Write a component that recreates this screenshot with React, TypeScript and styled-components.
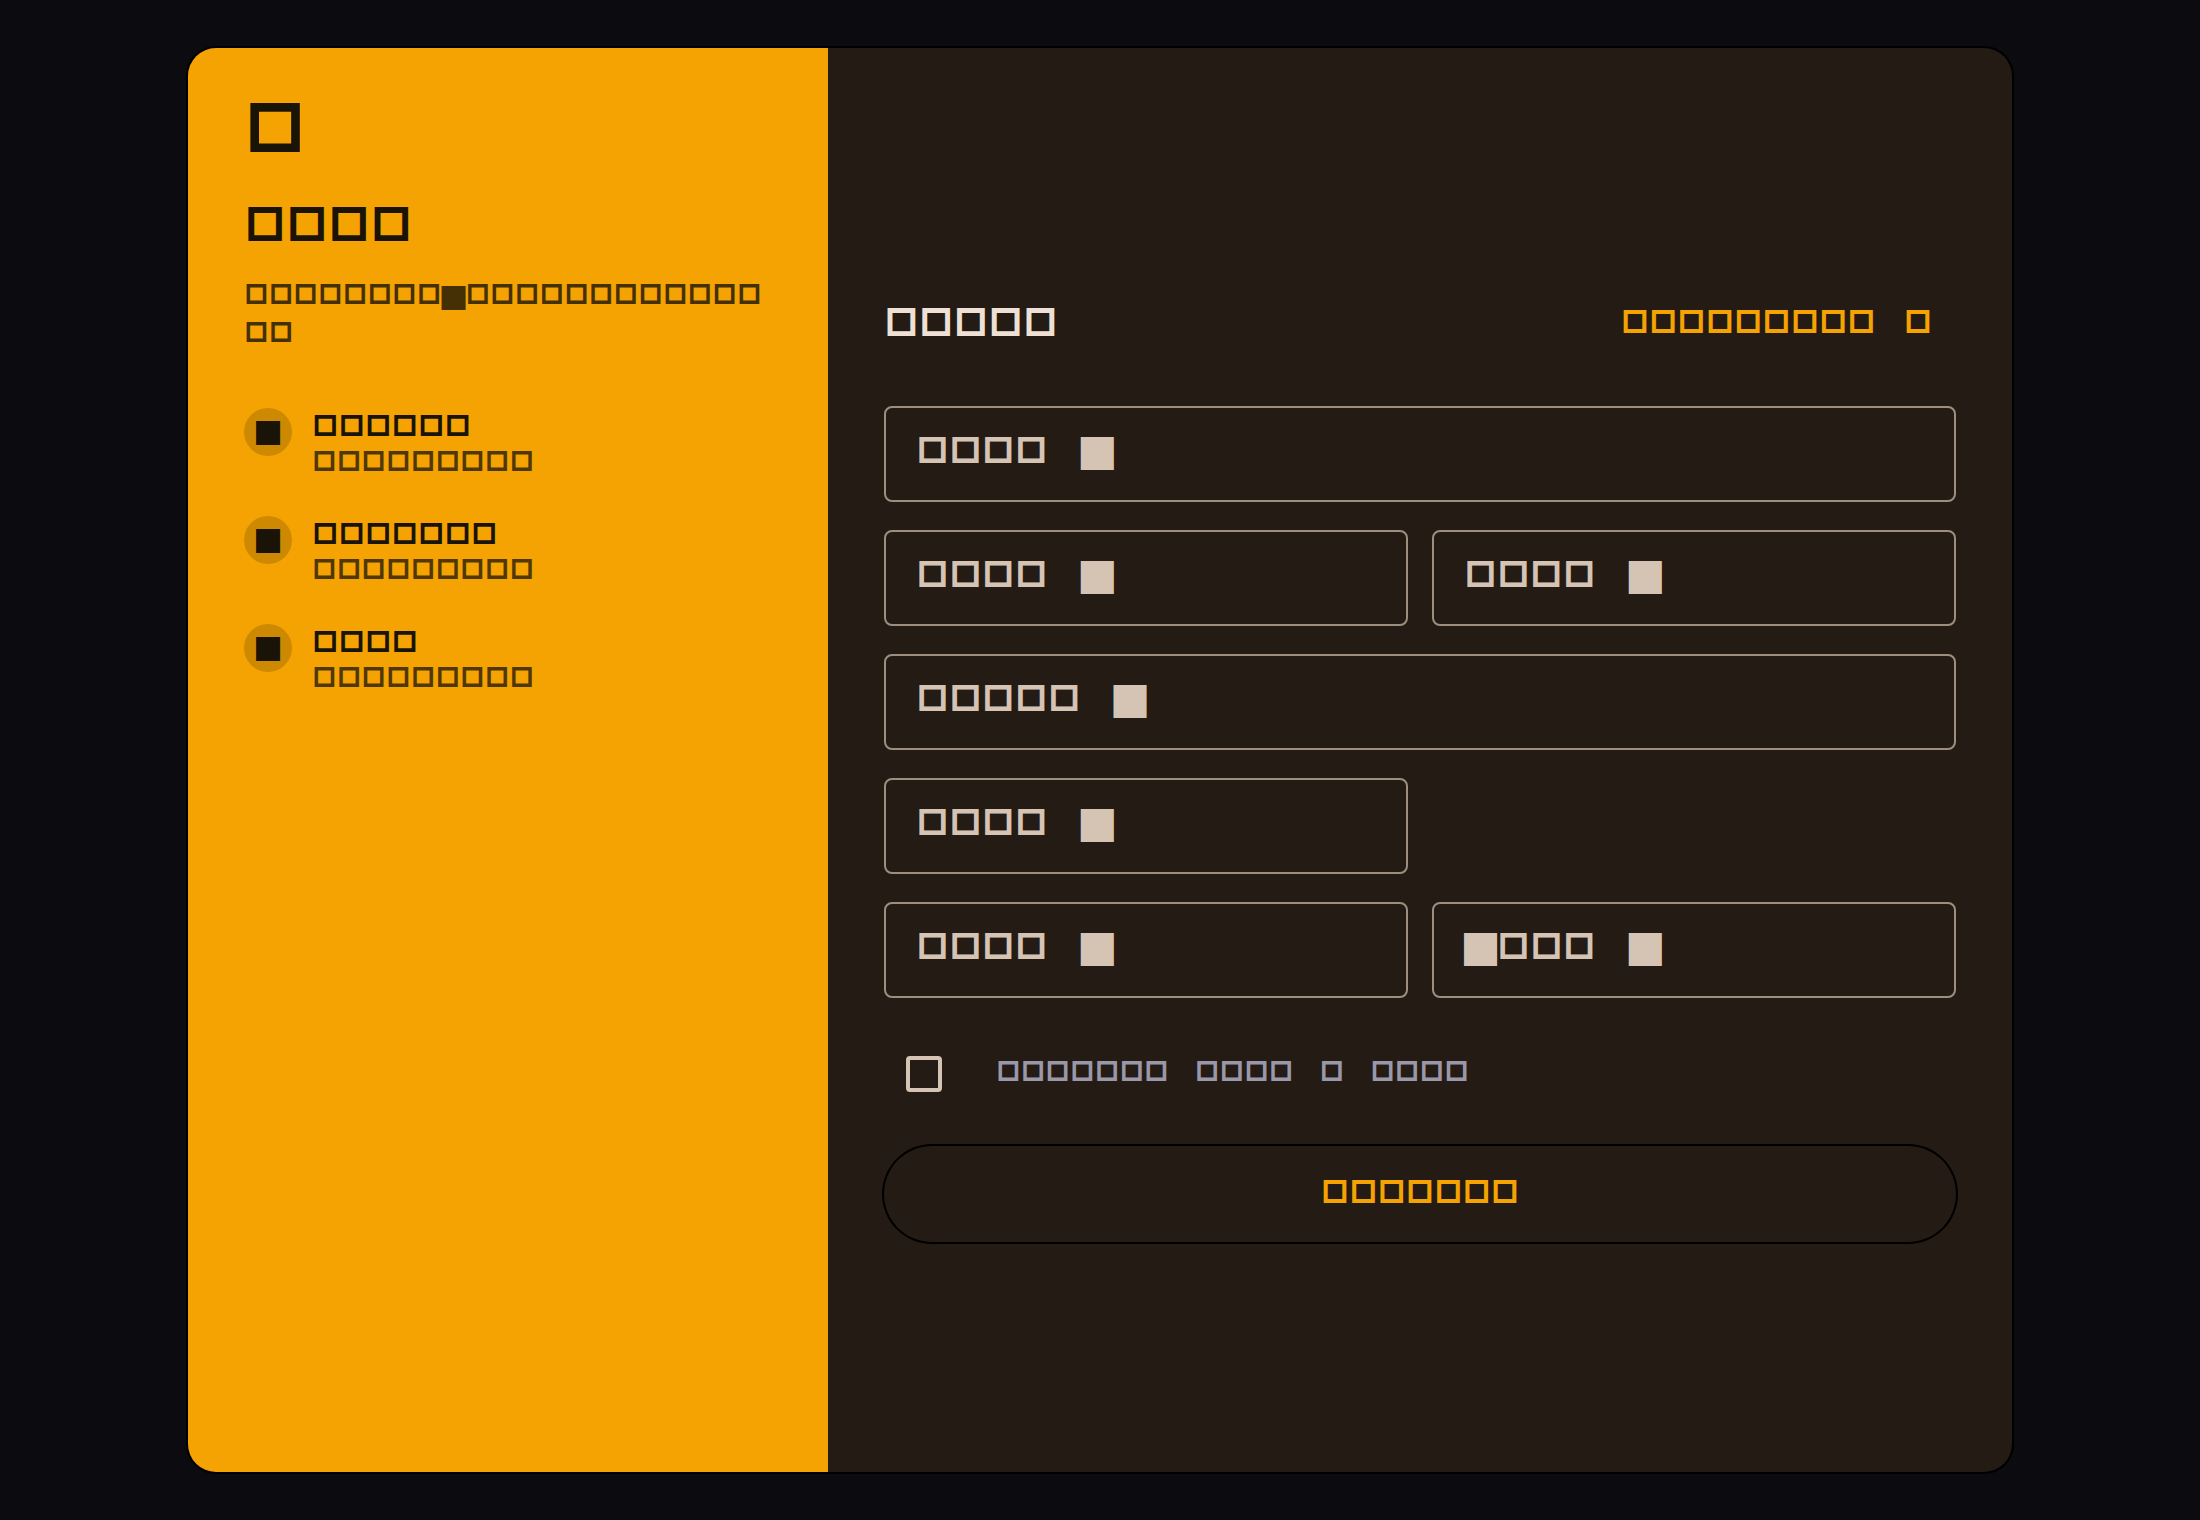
import React, { useId } from "react";
import styled, { createGlobalStyle } from "styled-components";

const color = {
  page: "#0b0b10",
  surface: "#231b14",
  accent: "#f5a302",
  ink: "#1a1408",
  heading: "#eee0d4",
  muted: "#d5c4b4",
  outline: "#9d8e7e",
  note: "#9a98a8",
  line: "#000000",
};

const GlobalStyle = createGlobalStyle`
  *, *::before, *::after { box-sizing: border-box; }
  body {
    margin: 0;
    background: ${color.page};
    font-family: Inter, "Noto Sans CJK SC", sans-serif;
    font-weight: 800;
  }
  h1, h2, h3, p, ul { margin: 0; padding: 0; font-weight: inherit; }
`;

const Page = styled.main`
  display: flex;
  justify-content: center;
  min-height: 100vh;
  padding: 48px;
`;

const Card = styled.div`
  display: grid;
  grid-template-columns: 640px minmax(0, 1fr);
  width: 100%;
  max-width: 1824px;
  border-radius: 28px;
  overflow: hidden;
  background: ${color.surface};
  box-shadow: 0 0 0 2px ${color.line};
`;

const Intro = styled.aside`
  padding: 44px 56px 56px;
  background: ${color.accent};
  color: ${color.ink};
`;

const Logo = styled.div`
  font-size: 68px;
  line-height: 70px;
`;

const Title = styled.h1`
  && { margin-top: 34px; }
  font-size: 46px;
  line-height: 56px;
`;

const Lead = styled.p`
  && { margin-top: 24px; }
  font-size: 27px;
  line-height: 38px;
  word-break: break-all;
  opacity: 0.8;
`;

const Features = styled.ul`
  && { margin-top: 56px; }
  display: flex;
  flex-direction: column;
  gap: 36px;
  list-style: none;
`;

const Feature = styled.li`
  display: flex;
  gap: 20px;
`;

const FeatureIcon = styled.span`
  display: flex;
  align-items: center;
  justify-content: center;
  width: 48px;
  height: 48px;
  border-radius: 50%;
  background: rgba(26, 20, 8, 0.18);
`;

const FeatureText = styled.div`
  line-height: 36px;
`;

const FeatureTitle = styled.h3`
  font-size: 29px;
`;

const FeatureNote = styled.p`
  font-size: 27px;
  opacity: 0.75;
`;

const Solid = styled.span<{ $size: number }>`
  font-family: "Noto Sans CJK SC", sans-serif;
  font-size: ${(p) => p.$size}px;
  font-weight: 400;
  line-height: 1;
  vertical-align: -3px;
`;

const Panel = styled.section`
  display: flex;
  flex-direction: column;
  justify-content: center;
  padding: 56px;
`;

const Header = styled.header`
  display: flex;
  align-items: center;
  justify-content: space-between;
  height: 88px;
  margin-bottom: 40px;
`;

const Heading = styled.h2`
  color: ${color.heading};
  font-size: 38px;
  line-height: 48px;
`;

const Words = styled.span<{ $gap: number }>`
  display: inline-flex;
  gap: ${(p) => p.$gap}px;
`;

const SwitchLink = styled.a`
  padding: 0 24px;
  color: ${color.accent};
  font-size: 31px;
  line-height: 40px;
  text-decoration: none;
`;

const Fields = styled.div`
  display: grid;
  grid-template-columns: 1fr 1fr;
  gap: 28px 24px;
`;

const FieldBox = styled.div<{ $column: string }>`
  display: grid;
  grid-column: ${(p) => p.$column};
  height: 96px;
`;

const FieldInput = styled.input`
  grid-area: 1 / 1;
  width: 100%;
  padding: 0 32px;
  border: 2px solid ${color.outline};
  border-radius: 8px;
  background: transparent;
  color: ${color.heading};
  font: inherit;
  font-size: 36px;
  outline: none;
`;

const FieldLabel = styled.label`
  grid-area: 1 / 1;
  align-self: center;
  justify-self: start;
  padding: 0 32px 8px;
  color: ${color.muted};
  font-size: 36px;
  line-height: 48px;
  white-space: nowrap;
  pointer-events: none;
`;

const Terms = styled.div`
  display: flex;
  align-items: center;
  gap: 32px;
  height: 80px;
  margin: 36px 0 32px;
`;

const CheckArea = styled.span`
  display: flex;
  align-items: center;
  justify-content: center;
  width: 80px;
  height: 80px;
`;

const Check = styled.input`
  appearance: none;
  width: 36px;
  height: 36px;
  margin: 0;
  border: 4px solid ${color.muted};
  border-radius: 4px;
  &:checked { background: ${color.accent}; border-color: ${color.accent}; }
`;

const TermsLabel = styled.label`
  padding-bottom: 4px;
  color: ${color.note};
  font-size: 27px;
  line-height: 36px;
`;

const Submit = styled.button`
  height: 96px;
  padding: 0 48px 4px;
  border: 0;
  border-radius: 48px;
  background: transparent;
  box-shadow: 0 0 0 2px ${color.line};
  color: ${color.accent};
  font: inherit;
  font-size: 31px;
  line-height: 40px;
`;

type FieldProps = { lead?: string; text: string; column?: string; type?: string };

function Field({ lead, text, column = "auto", type = "text" }: FieldProps) {
  const id = useId();
  return (
    <FieldBox $column={column}>
      <FieldInput id={id} type={type} required />
      <FieldLabel htmlFor={id}>
        {lead && <Solid $size={33}>{lead}</Solid>}
        {text}
        <Solid $size={33}>{"\u3000█"}</Solid>
      </FieldLabel>
    </FieldBox>
  );
}

const features = [
  { title: "□□□□□□", note: "□□□□□□□□□" },
  { title: "□□□□□□□", note: "□□□□□□□□□" },
  { title: "□□□□", note: "□□□□□□□□□" },
];

export default function App() {
  return (
    <>
      <GlobalStyle />
      <Page>
        <Card>
          <Intro>
            <Logo>□</Logo>
            <Title>□□□□</Title>
            <Lead>
              □□□□□□□□<Solid $size={24}>█</Solid>□□□□□□□□□□□□□□
            </Lead>
            <Features>
              {features.map((f) => (
                <Feature key={f.title}>
                  <FeatureIcon>
                    <Solid $size={24}>█</Solid>
                  </FeatureIcon>
                  <FeatureText>
                    <FeatureTitle>{f.title}</FeatureTitle>
                    <FeatureNote>{f.note}</FeatureNote>
                  </FeatureText>
                </Feature>
              ))}
            </Features>
          </Intro>
          <Panel>
            <Header>
              <Heading>□□□□□</Heading>
              <SwitchLink href="#login">
                <Words $gap={28}>
                  <span>□□□□□□□□□</span>
                  <span>□</span>
                </Words>
              </SwitchLink>
            </Header>
            <Fields>
              <Field text="□□□□" column="1 / -1" />
              <Field text="□□□□" />
              <Field text="□□□□" />
              <Field text="□□□□□" type="email" column="1 / -1" />
              <Field text="□□□□" />
              <Field text="□□□□" type="password" column="1" />
              <Field lead="█" text="□□□" type="password" />
            </Fields>
            <Terms>
              <CheckArea>
                <Check id="terms" type="checkbox" />
              </CheckArea>
              <TermsLabel htmlFor="terms">
                <Words $gap={26}>
                  <span>□□□□□□□</span>
                  <span>□□□□</span>
                  <span>□</span>
                  <span>□□□□</span>
                </Words>
              </TermsLabel>
            </Terms>
            <Submit type="button">□□□□□□□</Submit>
          </Panel>
        </Card>
      </Page>
    </>
  );
}
